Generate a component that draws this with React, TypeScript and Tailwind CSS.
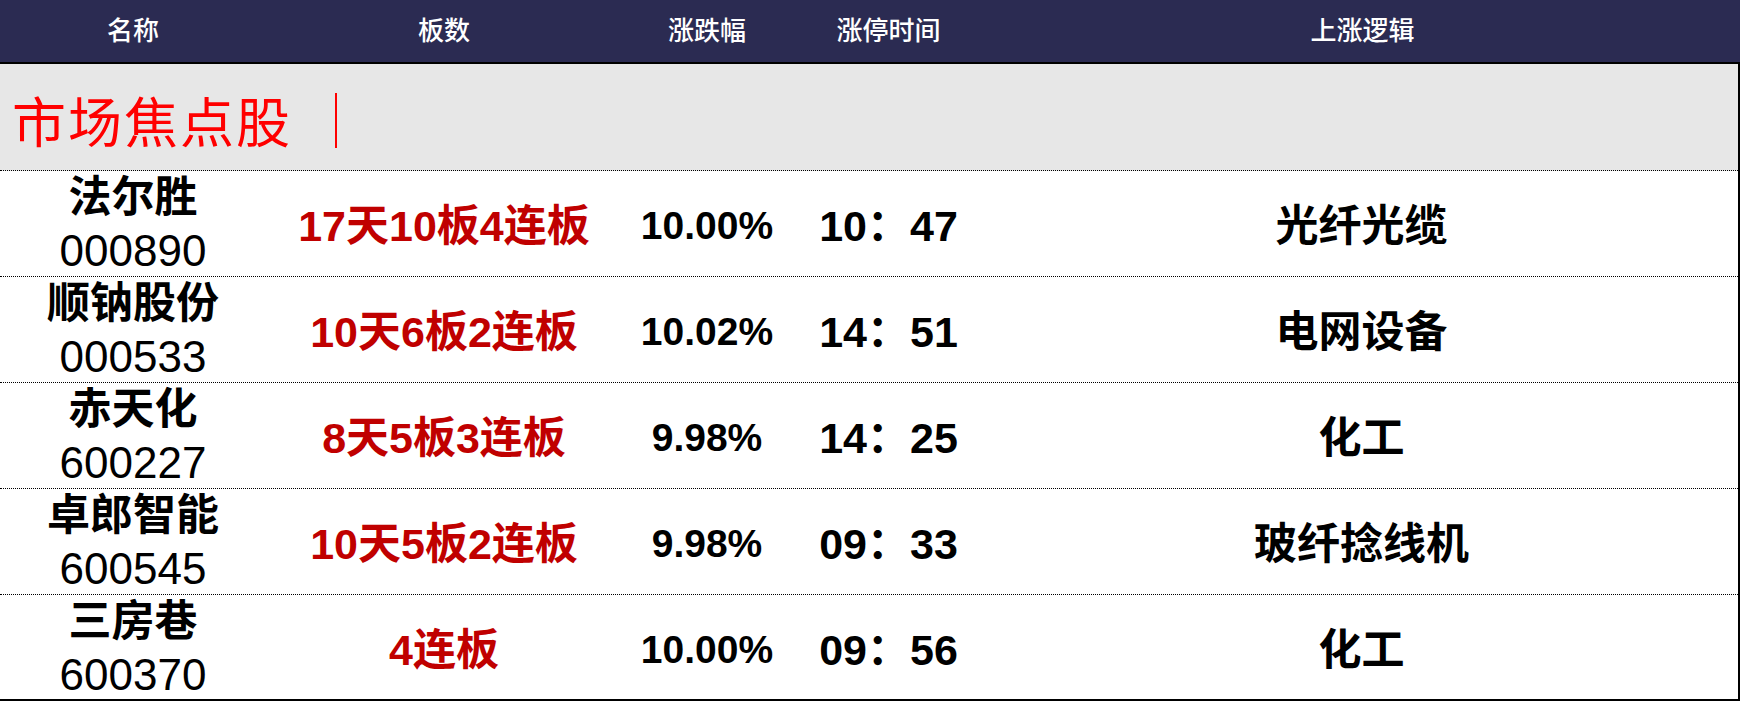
const cjk = "font-['Liberation_Sans','Noto_Sans_CJK_SC',sans-serif]";

const rows = [
  { name: "法尔胜", code: "000890", boards: "17天10板4连板", pct: "10.00%", time: "10：47", logic: "光纤光缆" },
  { name: "顺钠股份", code: "000533", boards: "10天6板2连板", pct: "10.02%", time: "14：51", logic: "电网设备" },
  { name: "赤天化", code: "600227", boards: "8天5板3连板", pct: "9.98%", time: "14：25", logic: "化工" },
  { name: "卓郎智能", code: "600545", boards: "10天5板2连板", pct: "9.98%", time: "09：33", logic: "玻纤捻线机" },
  { name: "三房巷", code: "600370", boards: "4连板", pct: "10.00%", time: "09：56", logic: "化工" },
];

const cols = "grid grid-cols-[266px_356px_170px_193px_1fr]";

export default function App() {
  return (
    <div className={`w-[1740px] h-[701px] overflow-hidden bg-white ${cjk}`}>
      <div className={`${cols} h-[64px] bg-[#2b2b52] border-b-2 border-black text-white text-[26px] font-medium items-center text-center`}>
        <div>名称</div>
        <div>板数</div>
        <div>涨跌幅</div>
        <div>涨停时间</div>
        <div>上涨逻辑</div>
      </div>

      <div className="border-r-2 border-black">
        <div className="h-[107px] bg-[#e7e7e7] border-b border-dotted border-black flex items-center pl-[12px] pt-[6px]">
          <span className="text-[#ff0000] text-[54px] leading-none font-['Noto_Sans_CJK_SC',serif] font-normal tracking-[2px]">市场焦点股</span>
          <span className="ml-[43px] w-[2px] h-[55px] bg-[#ff0000]" />
        </div>

        {rows.map((r, i) => (
          <div
            key={r.code}
            className={`${cols} h-[106px] items-center text-center text-[43px] text-black ${
              i === rows.length - 1 ? "border-b-2 border-solid" : "border-b border-dotted"
            } border-black`}
          >
            <div className="flex flex-col items-center leading-[53px]">
              <span className="font-bold">{r.name}</span>
              <span className="text-[44px]">{r.code}</span>
            </div>
            <div className="text-[#c00000] font-bold pt-[4px]">{r.boards}</div>
            <div className="font-bold text-[39px] pt-[4px]">{r.pct}</div>
            <div className="font-bold pt-[4px]">{r.time}</div>
            <div className="font-bold pt-[4px]">{r.logic}</div>
          </div>
        ))}
      </div>
    </div>
  );
}
